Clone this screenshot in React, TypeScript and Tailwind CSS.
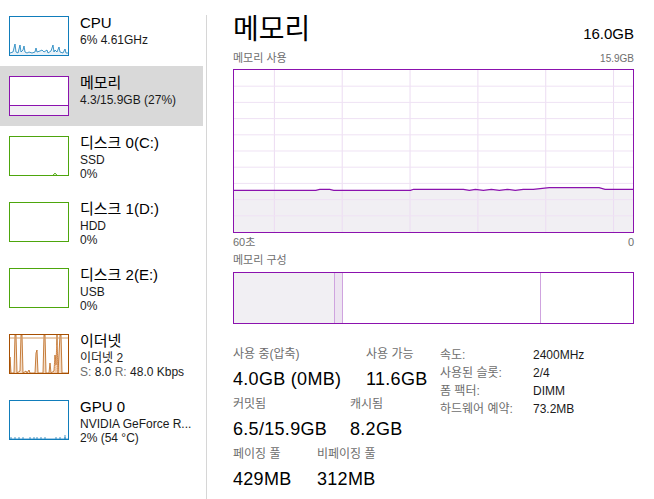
import React from "react";

const GRAY = "text-[#6e6e6e]";

function CpuThumb() {
  const pts =
    "0,36 3,35 5,27 6,35 8,36 10,28 11,35 13,33 14,29 15,35 17,36 19,35 22,36 25,35 26,31 27,35 30,34 32,33 34,35 37,33 38,36 41,34 43,28 44,35 45,33 47,35 49,30 50,35 53,36 55,32 56,36 58,36";
  return (
    <svg viewBox="0 0 58 38" className="h-full w-full" preserveAspectRatio="none">
      <polygon points={`0,38 ${pts} 58,38`} fill="#e8f2f9" />
      <polyline points={pts} fill="none" stroke="#117dbb" strokeWidth="0.8" />
    </svg>
  );
}

function EthThumb() {
  const pts =
    "0,38 0,22 1,38 4,38 5,0 6,0 7,38 10,36 11,0 12,0 13,38 16,36 17,38 19,35 20,38 25,38 26,18 27,15 28,38 33,38 34,0 35,0 36,38 39,38 40,28 41,38 44,36 45,20 46,30 47,0 48,38 50,0 51,0 52,38 58,38";
  return (
    <svg viewBox="0 0 58 38" className="h-full w-full" preserveAspectRatio="none">
      <polygon points={pts} fill="#f3dcc6" />
      <polyline points={pts} fill="none" stroke="#c0712a" strokeWidth="0.9" />
      <line x1="0" y1="3" x2="58" y2="3" stroke="#d49a63" strokeWidth="1" />
      <polyline points="44,38 45,24 46,38 47,10 48,38" fill="none" stroke="#e9a77a" strokeWidth="0.7" strokeDasharray="1 1" />
    </svg>
  );
}

function MemThumb() {
  return (
    <div className="flex h-full flex-col">
      <div className="flex-1" />
      <div className="h-[10px] border-t border-[#8b12ae] bg-[#f1eff3]" />
    </div>
  );
}

function DiskThumb({ bump }: { bump?: boolean }) {
  return (
    <svg viewBox="0 0 58 38" className="h-full w-full" preserveAspectRatio="none">
      {bump && <polyline points="43,38 45,36 47,38" fill="#d7ecc4" stroke="#4da60c" strokeWidth="0.8" />}
    </svg>
  );
}

function GpuThumb() {
  const xs = [1, 5, 9, 13, 20, 24, 27, 31, 35, 46, 50, 55];
  return (
    <svg viewBox="0 0 58 38" className="h-full w-full" preserveAspectRatio="none">
      <line x1="0" y1="37.5" x2="58" y2="37.5" stroke="#a8cde6" strokeWidth="1" />
      {xs.map((x) => (
        <line key={x} x1={x} y1="38" x2={x} y2="36" stroke="#117dbb" strokeWidth="0.8" />
      ))}
      <line x1="55" y1="38" x2="55" y2="34" stroke="#117dbb" strokeWidth="0.8" />
    </svg>
  );
}

function SideItem({
  tall,
  selected,
  border,
  thumb,
  title,
  lines,
}: {
  tall?: boolean;
  selected?: boolean;
  border: string;
  thumb: React.ReactNode;
  title: string;
  lines: React.ReactNode[];
}) {
  return (
    <div
      className={`flex pl-[9px] pt-[10px] ${tall ? "h-[66px]" : "h-[60px]"} ${
        selected ? "bg-[#d9d9d9]" : ""
      }`}
    >
      <div className={`h-[40px] w-[60px] shrink-0 overflow-hidden border bg-white ${border}`}>{thumb}</div>
      <div className="-mt-[3px] ml-[11px] min-w-0">
        <div className="text-[15px] leading-[20px] text-black">{title}</div>
        {lines.map((l, i) => (
          <div key={i} className="whitespace-nowrap text-[12px] leading-[14px] text-[#1a1a1a]">
            {l}
          </div>
        ))}
      </div>
    </div>
  );
}

function UsageGraph() {
  const line =
    "0,120.3 82,120.3 86,119.3 96,119.3 100,120.3 177,120.3 180,119.3 230,119.3 236,120.3 242,119.3 250,120.3 258,119.3 266,120.3 274,119.3 282,120.3 290,119.3 300,119.3 316,117.7 366,117.7 372,119.3 400,119.3";
  const vs = [40, 108, 176, 244, 312, 380];
  const hs = [1, 2, 3, 4, 5, 6, 7, 8, 9].map((k) => k * 16.2);
  return (
    <svg viewBox="0 0 400 162" className="block h-full w-full" preserveAspectRatio="none">
      <polygon points={`${line} 400,162 0,162`} fill="#f1eff3" />
      {vs.map((x) => (
        <line key={x} x1={x + 0.5} y1="0" x2={x + 0.5} y2="162" stroke="#ecdcf2" strokeWidth="1" />
      ))}
      {hs.map((y) => (
        <line key={y} x1="0" y1={y} x2="400" y2={y} stroke="#efe2f4" strokeWidth="1" />
      ))}
      <polyline points={line} fill="none" stroke="#8b12ae" strokeWidth="1.2" />
    </svg>
  );
}

function Stat({ label, value, w }: { label: string; value: string; w: string }) {
  return (
    <div className={`${w} shrink-0`}>
      <div className={`text-[12px] leading-[16px] ${GRAY}`}>{label}</div>
      <div className="mt-[5px] whitespace-nowrap text-[18px] leading-[24px] tracking-[0.3px] text-black">{value}</div>
    </div>
  );
}

export default function App() {
  return (
    <div className="flex h-[499px] w-[654px] overflow-hidden bg-white [font-family:'Liberation_Sans','Noto_Sans_CJK_KR',sans-serif]">
      {/* sidebar */}
      <aside className="w-[203px] shrink-0 pt-[6px]">
        <SideItem border="border-[#117dbb]" thumb={<CpuThumb />} title="CPU" lines={["6% 4.61GHz"]} />
        <SideItem
          selected
          border="border-[#8b12ae]"
          thumb={<MemThumb />}
          title="메모리"
          lines={["4.3/15.9GB (27%)"]}
        />
        <SideItem tall border="border-[#4da60c]" thumb={<DiskThumb bump />} title="디스크 0(C:)" lines={["SSD", "0%"]} />
        <SideItem tall border="border-[#4da60c]" thumb={<DiskThumb />} title="디스크 1(D:)" lines={["HDD", "0%"]} />
        <SideItem tall border="border-[#4da60c]" thumb={<DiskThumb />} title="디스크 2(E:)" lines={["USB", "0%"]} />
        <SideItem
          tall
          border="border-[#a74f01]"
          thumb={<EthThumb />}
          title="이더넷"
          lines={[
            "이더넷 2",
            <span>
              <span className={GRAY}>S:</span> 8.0 <span className={GRAY}>R:</span> 48.0 Kbps
            </span>,
          ]}
        />
        <SideItem
          tall
          border="border-[#117dbb]"
          thumb={<GpuThumb />}
          title="GPU 0"
          lines={["NVIDIA GeForce R...", "2% (54 °C)"]}
        />
      </aside>

      <div className="ml-[3px] mt-[15px] w-px bg-[#d6d6d6]" />

      {/* main */}
      <main className="flex-1 pl-[26px] pr-[20px] pt-[12px]">
        <div className="flex h-[35px] items-baseline justify-between">
          <div className="text-[28px] leading-[35px] text-black">메모리</div>
          <div className="text-[15px] leading-[20px] text-black">16.0GB</div>
        </div>
        <div className={`mt-[4px] flex items-baseline justify-between leading-[14px] ${GRAY}`}>
          <span className="text-[11px]">메모리 사용</span>
          <span className="text-[10px]">15.9GB</span>
        </div>
        <div className="mt-[3px] h-[164px] border border-[#8b12ae]">
          <UsageGraph />
        </div>
        <div className={`mt-[2px] flex justify-between text-[11px] leading-[14px] ${GRAY}`}>
          <span>60초</span>
          <span>0</span>
        </div>
        <div className={`mt-[4px] text-[11px] leading-[14px] ${GRAY}`}>메모리 구성</div>
        <div className="mt-[5px] flex h-[52px] border border-[#8b12ae]">
          <div className="w-[101px] border-r border-[#cfa3df] bg-[#f1eff3]" />
          <div className="w-[8px] border-r border-[#cfa3df] bg-[#ede4f1]" />
          <div className="w-[198px] border-r border-[#cfa3df]" />
          <div className="flex-1" />
        </div>

        <div className="mt-[22px] flex items-start">
          <div className="flex w-[207px] shrink-0 flex-col gap-[5px]">
            <div className="flex">
              <Stat w="w-[133px]" label="사용 중(압축)" value="4.0GB (0MB)" />
              <Stat w="w-auto" label="사용 가능" value="11.6GB" />
            </div>
            <div className="flex">
              <Stat w="w-[117px]" label="커밋됨" value="6.5/15.9GB" />
              <Stat w="w-auto" label="캐시됨" value="8.2GB" />
            </div>
            <div className="flex">
              <Stat w="w-[84px]" label="페이징 풀" value="429MB" />
              <Stat w="w-auto" label="비페이징 풀" value="312MB" />
            </div>
          </div>
          <div className="grid grid-cols-[93px_auto] content-start text-[12px] leading-[18px]">
            <span className={GRAY}>속도:</span>
            <span className="text-[#1a1a1a]">2400MHz</span>
            <span className={GRAY}>사용된 슬롯:</span>
            <span className="text-[#1a1a1a]">2/4</span>
            <span className={GRAY}>폼 팩터:</span>
            <span className="text-[#1a1a1a]">DIMM</span>
            <span className={GRAY}>하드웨어 예약:</span>
            <span className="text-[#1a1a1a]">73.2MB</span>
          </div>
        </div>
      </main>
    </div>
  );
}
